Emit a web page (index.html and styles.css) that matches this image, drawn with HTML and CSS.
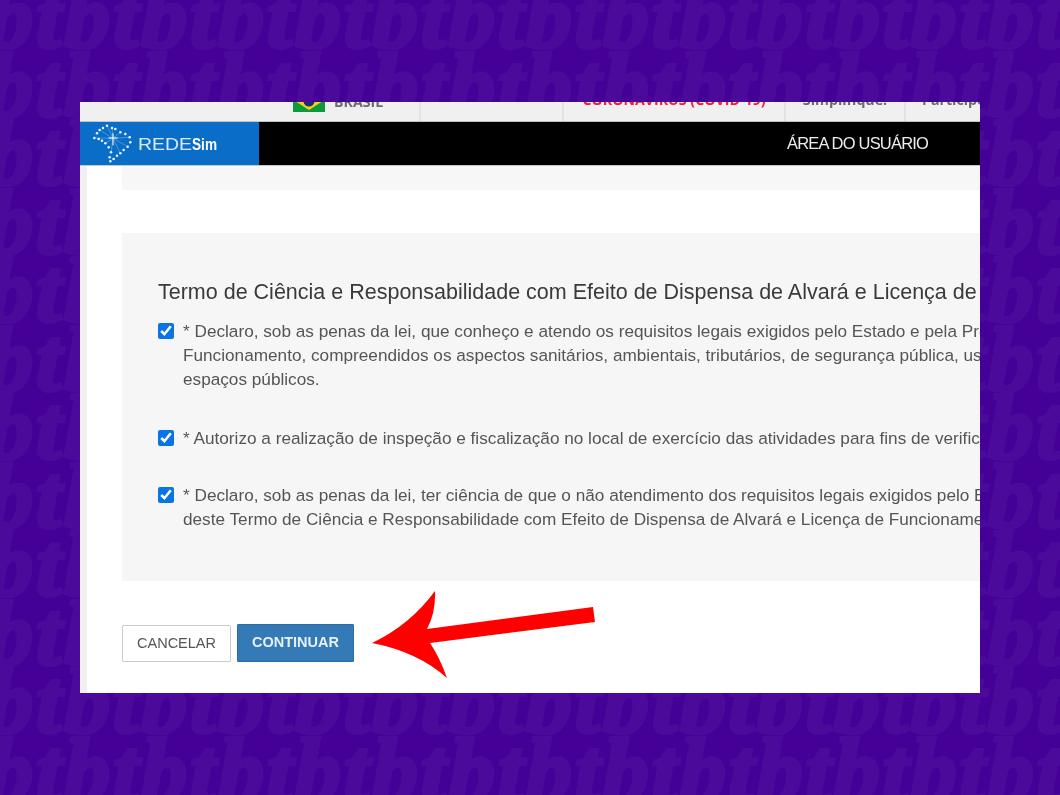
FILE: index.html
```html
<!DOCTYPE html>
<html lang="pt-BR">

<head>
  <meta charset="utf-8">
  <meta name="viewport" content="width=device-width, initial-scale=1">
  <title>Termo de Ciência e Responsabilidade</title>
  <link rel="stylesheet" href="styles.css">
</head>

<body>

  <div class="pattern" aria-hidden="true">
    <div class="pattern-row">tbtbtbtbtbtbtbtbtbtbtbtbtbtbtbtb</div>
    <div class="pattern-row">tbtbtbtbtbtbtbtbtbtbtbtbtbtbtbtb</div>
    <div class="pattern-row">tbtbtbtbtbtbtbtbtbtbtbtbtbtbtbtb</div>
    <div class="pattern-row">tbtbtbtbtbtbtbtbtbtbtbtbtbtbtbtb</div>
    <div class="pattern-row">tbtbtbtbtbtbtbtbtbtbtbtbtbtbtbtb</div>
    <div class="pattern-row">tbtbtbtbtbtbtbtbtbtbtbtbtbtbtbtb</div>
    <div class="pattern-row">tbtbtbtbtbtbtbtbtbtbtbtbtbtbtbtb</div>
    <div class="pattern-row">tbtbtbtbtbtbtbtbtbtbtbtbtbtbtbtb</div>
    <div class="pattern-row">tbtbtbtbtbtbtbtbtbtbtbtbtbtbtbtb</div>
    <div class="pattern-row">tbtbtbtbtbtbtbtbtbtbtbtbtbtbtbtb</div>
    <div class="pattern-row">tbtbtbtbtbtbtbtbtbtbtbtbtbtbtbtb</div>
    <div class="pattern-row">tbtbtbtbtbtbtbtbtbtbtbtbtbtbtbtb</div>
  </div>

  <div class="shot">
    <div class="govbar">
      <div class="gov-cell gov-brasil">
        <svg class="flag" width="32" height="22" viewBox="0 0 32 22">
          <rect width="32" height="22" fill="#0d9a3c" />
          <polygon points="16,2 30,11 16,20 2,11" fill="#f2d410" />
          <circle cx="16" cy="11" r="5.5" fill="#1d2a78" />
        </svg>
        <span>BRASIL</span>
      </div>
      <div class="gov-cell gov-empty"></div>
      <div class="gov-cell gov-covid"><span>CORONAVÍRUS (COVID-19)</span></div>
      <div class="gov-cell gov-simple"><span>Simplifique!</span></div>
      <div class="gov-cell gov-part"><span>Participe</span></div>
    </div>

    <header class="topnav">
      <div class="brand">
        <svg class="brand-map" width="40" height="40" viewBox="68 100 120 120">
          <g stroke="#cfe4f8" stroke-width="1.6" opacity="0.6">
            <line x1="128" y1="143" x2="110" y2="105" />
            <line x1="128" y1="143" x2="88" y2="118" />
            <line x1="128" y1="143" x2="72" y2="142" />
            <line x1="128" y1="143" x2="125" y2="112" />
            <line x1="128" y1="143" x2="150" y2="125" />
            <line x1="128" y1="143" x2="178" y2="140" />
            <line x1="128" y1="143" x2="172" y2="168" />
            <line x1="128" y1="143" x2="150" y2="188" />
            <line x1="128" y1="143" x2="122" y2="185" />
            <line x1="128" y1="143" x2="105" y2="158" />
          </g>
          <path d="M128 128v36M114 142h28" stroke="#ffffff" stroke-width="3" />
          <g fill="#eef6fd">
            <circle cx="110" cy="105" r="3.8" />
            <circle cx="98" cy="112" r="3.8" />
            <circle cx="88" cy="118" r="3.8" />
            <circle cx="80" cy="128" r="3.8" />
            <circle cx="72" cy="142" r="3.8" />
            <circle cx="125" cy="112" r="3.8" />
            <circle cx="135" cy="115" r="3.8" />
            <circle cx="150" cy="125" r="3.8" />
            <circle cx="165" cy="130" r="3.8" />
            <circle cx="178" cy="140" r="3.8" />
            <circle cx="180" cy="155" r="3.8" />
            <circle cx="172" cy="168" r="3.8" />
            <circle cx="160" cy="178" r="3.8" />
            <circle cx="150" cy="188" r="3.8" />
            <circle cx="140" cy="195" r="3.8" />
            <circle cx="130" cy="205" r="3.8" />
            <circle cx="120" cy="212" r="3.8" />
            <circle cx="118" cy="200" r="3.8" />
            <circle cx="122" cy="185" r="3.8" />
            <circle cx="115" cy="170" r="3.8" />
            <circle cx="105" cy="158" r="3.8" />
            <circle cx="95" cy="150" r="3.8" />
            <circle cx="85" cy="145" r="3.8" />
          </g>
        </svg>
        <svg class="brand-name" width="80" height="16" viewBox="0 0 80 16">
          <text class="brand-rede" x="0" y="14" textLength="54" lengthAdjust="spacingAndGlyphs">REDE</text>
          <text class="brand-sim" x="54" y="14" textLength="25" lengthAdjust="spacingAndGlyphs">Sim</text>
        </svg>
      </div>
      <nav class="topnav-links">
        <a class="topnav-link">ÁREA DO USUÁRIO</a>
      </nav>
    </header>

    <main class="content">
      <div class="panel-top"></div>

      <section class="panel">
        <h2 class="panel-title">Termo de Ciência e Responsabilidade com Efeito de Dispensa de Alvará e Licença de Funcionamento</h2>

        <label class="term term-first">
          <input type="checkbox" checked>
          <span>* Declaro, sob as penas da lei, que conheço e atendo os requisitos legais exigidos pelo Estado e pela Prefeitura para o exercício das atividades<br>
            Funcionamento, compreendidos os aspectos sanitários, ambientais, tributários, de segurança pública, uso e ocupação do solo, atividades domiciliares<br>
            espaços públicos.</span>
        </label>

        <label class="term term-second">
          <input type="checkbox" checked>
          <span>* Autorizo a realização de inspeção e fiscalização no local de exercício das atividades para fins de verificação da observância dos requisitos</span>
        </label>

        <label class="term term-third">
          <input type="checkbox" checked>
          <span>* Declaro, sob as penas da lei, ter ciência de que o não atendimento dos requisitos legais exigidos pelo Estado e pela Prefeitura<br>
            deste Termo de Ciência e Responsabilidade com Efeito de Dispensa de Alvará e Licença de Funcionamento</span>
        </label>
      </section>

      <div class="actions">
        <button class="btn btn-cancel" type="button">CANCELAR</button>
        <button class="btn btn-next" type="button">CONTINUAR</button>
      </div>
    </main>
  </div>

  <!-- seta vermelha por cima do print -->
  <svg class="arrow" width="1060" height="795" viewBox="0 0 1060 795" aria-hidden="true">
    <path d="M372 643 Q410 625 435 591 Q436 612 427 629 L593 607 L595 622 L430 643 Q440 658 447 678 Q418 652 372 643 Z" fill="#fe0000" />
  </svg>

</body>

</html>
```

FILE: styles.css
```css
body {
  margin: 0;
  height: 795px;
  padding: 102px 80px;
  box-sizing: border-box;
  position: relative;
  overflow: hidden;
  background-color: #450098;
  font-family: "Liberation Sans", Arial, sans-serif;
}

/* fundo com as letras repetidas */
.pattern {
  position: absolute;
  top: -18px;
  left: -41px;
  right: 0;
  bottom: 0;
  overflow: hidden;
}

.pattern-row {
  font-family: "Liberation Serif", serif;
  font-weight: bold;
  font-style: italic;
  font-size: 92px;
  line-height: 68.5px;
  letter-spacing: 2.7px;
  color: #4c0a9a;
  -webkit-text-stroke: 4px #4c0a9a;
  white-space: nowrap;
}

.shot {
  position: relative;
  height: 591px;
  overflow: hidden;
  background-color: #fff;
  filter: blur(0.35px);
}

/* barra do governo, cortada em cima */
.govbar {
  display: flex;
  height: 19px;
  overflow: hidden;
  background-color: #f0f0f0;
  border-bottom: 1px solid #c4c4c4;
  font-family: "Open Sans", sans-serif;
  font-weight: bold;
  font-size: 14.2px;
  line-height: 20px;
  color: #6c6c6c;
}

.gov-cell {
  display: flex;
  align-items: flex-end;
  flex-shrink: 0;
  height: 19px;
  box-sizing: border-box;
  border-right: 2px solid #e2e2e2;
}

.gov-cell span {
  padding-bottom: 9px;
}

.gov-covid span {
  padding-bottom: 11px;
}

.gov-simple span,
.gov-part span {
  padding-bottom: 11px;
}

.gov-brasil {
  width: 341px;
  padding-left: 213px;
  gap: 9px;
}

.flag {
  flex-shrink: 0;
  margin-bottom: 9px;
}

.gov-empty {
  width: 143px;
}

.gov-covid {
  width: 222px;
  justify-content: center;
  color: #fb1a2c;
}

.gov-simple {
  width: 120px;
  justify-content: center;
}

.gov-part {
  padding-left: 16px;
  border-right: none;
}

.topnav {
  display: flex;
  height: 43px;
  background-color: #000;
  border-bottom: 1px solid #c8c8c8;
}

.brand {
  display: flex;
  align-items: center;
  gap: 5px;
  width: 179px;
  box-sizing: border-box;
  padding-left: 13px;
  background-color: #0a6ec8;
}

.brand-map {
  flex-shrink: 0;
}

.brand-rede {
  font-family: "Liberation Sans", sans-serif;
  font-size: 16px;
  fill: #d9e9f8;
}

.brand-sim {
  font-family: "Liberation Sans", sans-serif;
  font-weight: bold;
  font-size: 16px;
  fill: #fff;
}

.topnav-links {
  display: flex;
  align-items: center;
  padding-left: 528px;
}

.topnav-link {
  color: #ececec;
  font-size: 16.5px;
  letter-spacing: -0.8px;
  white-space: nowrap;
}

.content {
  border-left: 7px solid #f1f0f1;
  padding-left: 35px;
  height: 527px;
}

.panel-top {
  height: 24px;
  background-color: #f8f7f8;
}

.panel {
  margin-top: 43px;
  height: 348px;
  box-sizing: border-box;
  padding: 46px 0 0 36px;
  background-color: #f7f6f7;
}

.panel-title {
  margin: 0;
  font-weight: normal;
  font-size: 21.5px;
  line-height: 26px;
  color: #3a3a3a;
  white-space: nowrap;
}

.term {
  display: flex;
  align-items: flex-start;
  gap: 9px;
  font-size: 17.2px;
  line-height: 24px;
  color: #555;
  white-space: nowrap;
}

.term input {
  width: 16px;
  height: 16px;
  margin: 4px 0 0;
  flex-shrink: 0;
  accent-color: #0b74e4;
}

.term-first {
  margin-top: 14px;
}

.term-second {
  margin-top: 35px;
}

.term-third {
  margin-top: 33px;
}

.actions {
  display: flex;
  align-items: flex-end;
  gap: 6px;
  margin-top: 43px;
}

.btn {
  font-family: "Liberation Sans", sans-serif;
  font-size: 14.5px;
  padding: 0 0 2px;
  border-radius: 1px;
  cursor: pointer;
}

.btn-cancel {
  width: 109px;
  height: 37px;
  background-color: #fff;
  border: 1px solid #ccc;
  color: #555;
}

.btn-next {
  width: 117px;
  height: 38px;
  background-color: #337ab7;
  border: 1px solid #2e6da4;
  color: #e8f0f7;
  font-weight: bold;
}

.arrow {
  position: absolute;
  top: 0;
  left: 0;
}
```
